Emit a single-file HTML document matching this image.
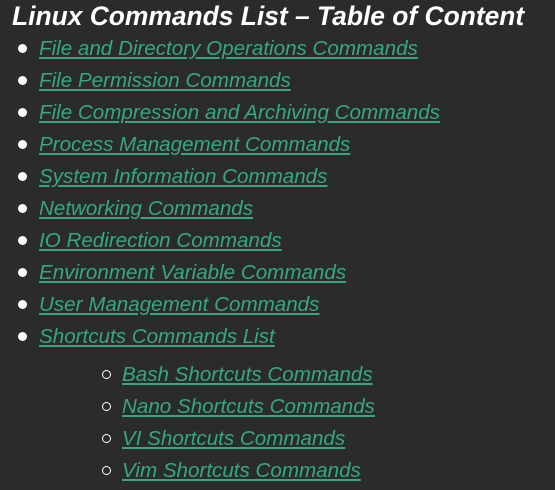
<!DOCTYPE html>
<html><head><style>
html,body{margin:0;padding:0;background:#2b2a2d;width:555px;height:490px;overflow:hidden;font-family:"Liberation Sans",sans-serif;font-style:italic;}
h2{position:absolute;left:12px;top:0;margin:0;color:#fff;font-size:26.4px;font-weight:bold;line-height:32px;white-space:nowrap;}
.it{position:absolute;left:39px;font-size:20.6px;line-height:24px;color:#36a97c;text-decoration:underline;white-space:nowrap;}
.b{position:absolute;width:9px;height:9px;border-radius:50%;background:#fff;left:18px;}
.c{position:absolute;width:7px;height:7px;border-radius:50%;border:1.5px solid #fff;left:102px;}
</style></head><body>
<h2>Linux Commands List – Table of Content</h2>
<div class="b" style="top:44px"></div><div class="it" style="top:37px">File and Directory Operations Commands</div>
<div class="b" style="top:76px"></div><div class="it" style="top:69px">File Permission Commands</div>
<div class="b" style="top:108px"></div><div class="it" style="top:101px">File Compression and Archiving Commands</div>
<div class="b" style="top:140px"></div><div class="it" style="top:133px">Process Management Commands</div>
<div class="b" style="top:172px"></div><div class="it" style="top:165px">System Information Commands</div>
<div class="b" style="top:204px"></div><div class="it" style="top:197px">Networking Commands</div>
<div class="b" style="top:236px"></div><div class="it" style="top:229px">IO Redirection Commands</div>
<div class="b" style="top:268px"></div><div class="it" style="top:261px">Environment Variable Commands</div>
<div class="b" style="top:300px"></div><div class="it" style="top:293px">User Management Commands</div>
<div class="b" style="top:332px"></div><div class="it" style="top:325px">Shortcuts Commands List</div>
<div class="c" style="top:370px"></div><div class="it" style="left:122px;top:363px">Bash Shortcuts Commands</div>
<div class="c" style="top:402px"></div><div class="it" style="left:122px;top:395px">Nano Shortcuts Commands</div>
<div class="c" style="top:434px"></div><div class="it" style="left:122px;top:427px">VI Shortcuts Commands</div>
<div class="c" style="top:466px"></div><div class="it" style="left:122px;top:459px">Vim Shortcuts Commands</div>
</body></html>
